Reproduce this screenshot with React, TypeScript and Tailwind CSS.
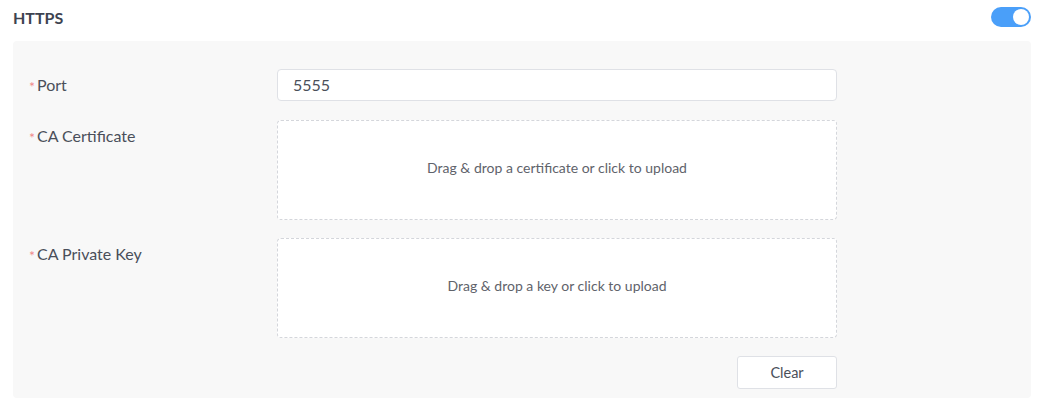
export default function App() {
  const font = { fontFamily: 'Lato, "Open Sans", sans-serif' };

  return (
    <div className="w-[1044px] h-[399px] bg-white overflow-hidden" style={font}>
      {/* Header */}
      <div className="flex items-center justify-between pl-[13px] pr-[13px] h-[41px]">
        <span className="text-[16px] font-bold text-[#3d4350] -mt-[5px]">HTTPS</span>
        <button className="relative w-[40px] h-[20px] rounded-full bg-[#4a9ff9] -mt-[7px]">
          <span className="absolute right-[2px] top-[2px] w-[16px] h-[16px] rounded-full bg-white" />
        </button>
      </div>

      {/* Panel */}
      <div className="mx-[13px] w-[1018px] h-[357px] rounded-[4px] bg-[#f8f8f8] pt-[28px] pl-[16px]">
        <div className="flex flex-col gap-[19px]">
          <div className="flex">
            <Label text="Port" />
            <div className="w-[560px] h-[32px] rounded-[4px] border border-[#dfe1e6] bg-white flex items-center pl-[15px] text-[16px] text-[#4a4f5a]">
              5555
            </div>
          </div>

          <div className="flex">
            <Label text="CA Certificate" />
            <Dropzone text="Drag & drop a certificate or click to upload" />
          </div>

          <div className="flex -mt-[1px]">
            <Label text="CA Private Key" />
            <Dropzone text="Drag & drop a key or click to upload" />
          </div>

          <div className="flex justify-end w-[808px] -mt-[1px]">
            <button className="w-[100px] h-[33px] rounded-[3px] border border-[#dfe1e6] bg-white text-[14.5px] text-[#4a4f5a]">
              Clear
            </button>
          </div>
        </div>
      </div>
    </div>
  );
}

function Label({ text }: { text: string }) {
  return (
    <div className="w-[248px] h-[32px] flex items-center text-[16px] text-[#4a4f5a]">
      <span className="text-[#f08a8a] text-[14px] mr-[2px] mt-[2px]">*</span>
      {text}
    </div>
  );
}

function Dropzone({ text }: { text: string }) {
  return (
    <div className="w-[560px] h-[100px] rounded-[4px] border border-dashed border-[#d4d6db] bg-white flex items-center justify-center pb-[5px] text-[14px] text-[#5f636b]">
      {text}
    </div>
  );
}
